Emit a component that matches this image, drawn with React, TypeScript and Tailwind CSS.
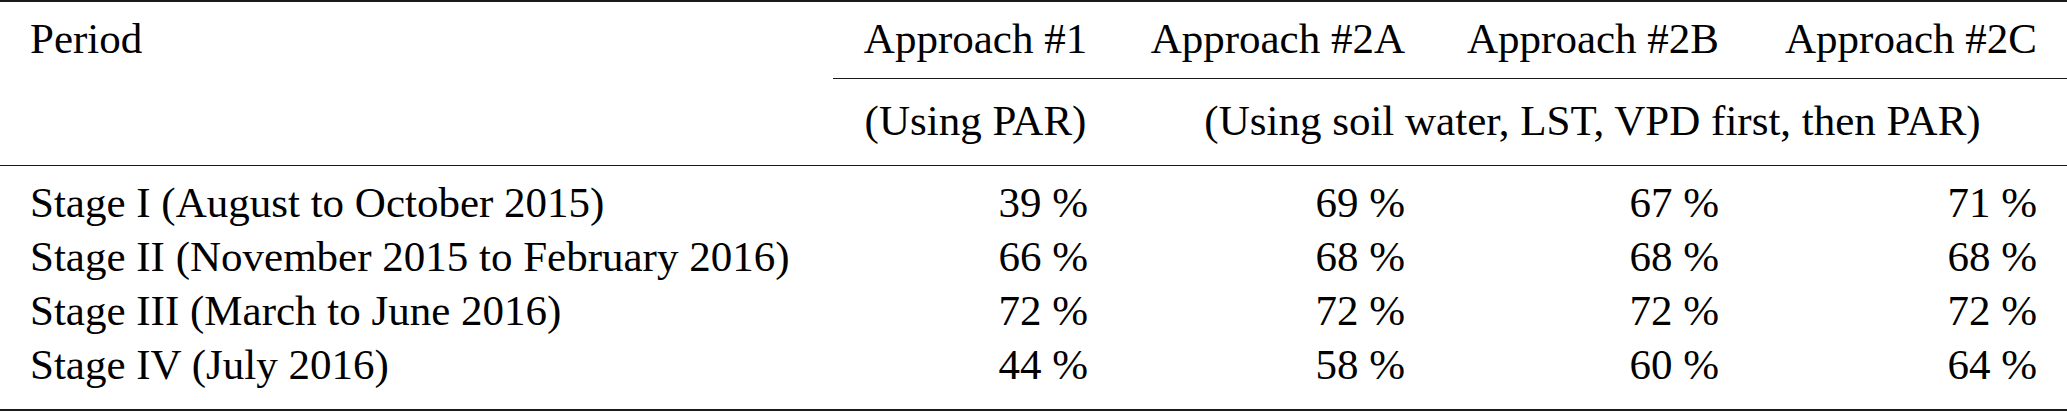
import React from 'react';

const rows = [
  { period: 'Stage I (August to October 2015)', values: ['39 %', '69 %', '67 %', '71 %'] },
  { period: 'Stage II (November 2015 to February 2016)', values: ['66 %', '68 %', '68 %', '68 %'] },
  { period: 'Stage III (March to June 2016)', values: ['72 %', '72 %', '72 %', '72 %'] },
  { period: 'Stage IV (July 2016)', values: ['44 %', '58 %', '60 %', '64 %'] },
];

const grid = 'grid grid-cols-[833px_285px_317px_314px_318px]';

export default function App() {
  return (
    <div className="w-[2067px] h-[412px] bg-white text-black text-[43px] leading-[54px] font-['Liberation_Serif','Times_New_Roman',serif]">
      <div className="border-t-2 border-b-2 border-[#1a1a1a] pb-[16.5px]">
        {/* Header row 1 */}
        <div className={grid}>
          <div className="px-[30px] pt-[9.5px] pb-[13px]">Period</div>
          <div className="px-[30px] pt-[9.5px] pb-[11.5px] text-center border-b-[1.5px] border-[#1a1a1a] whitespace-nowrap">
            Approach #1
          </div>
          <div className="px-[30px] pt-[9.5px] pb-[11.5px] text-right border-b-[1.5px] border-[#1a1a1a] whitespace-nowrap">
            Approach #2A
          </div>
          <div className="px-[30px] pt-[9.5px] pb-[11.5px] text-right border-b-[1.5px] border-[#1a1a1a] whitespace-nowrap">
            Approach #2B
          </div>
          <div className="px-[30px] pt-[9.5px] pb-[11.5px] text-right border-b-[1.5px] border-[#1a1a1a] whitespace-nowrap">
            Approach #2C
          </div>
        </div>

        {/* Header row 2 */}
        <div className={`${grid} border-b-[1.5px] border-[#1a1a1a] pt-[15px] pb-[17.5px]`}>
          <div className="px-[30px]" />
          <div className="px-[30px] text-center whitespace-nowrap">(Using PAR)</div>
          <div className="col-span-3 px-[30px] text-center whitespace-nowrap">
            (Using soil water, LST, VPD first, then PAR)
          </div>
        </div>

        {/* Body */}
        <div className="pt-[10px]">
          {rows.map((row) => (
            <div key={row.period} className={grid}>
              <div className="px-[30px] whitespace-nowrap">{row.period}</div>
              {row.values.map((v, i) => (
                <div key={i} className="px-[30px] text-right whitespace-nowrap">
                  {v}
                </div>
              ))}
            </div>
          ))}
        </div>
      </div>
    </div>
  );
}
